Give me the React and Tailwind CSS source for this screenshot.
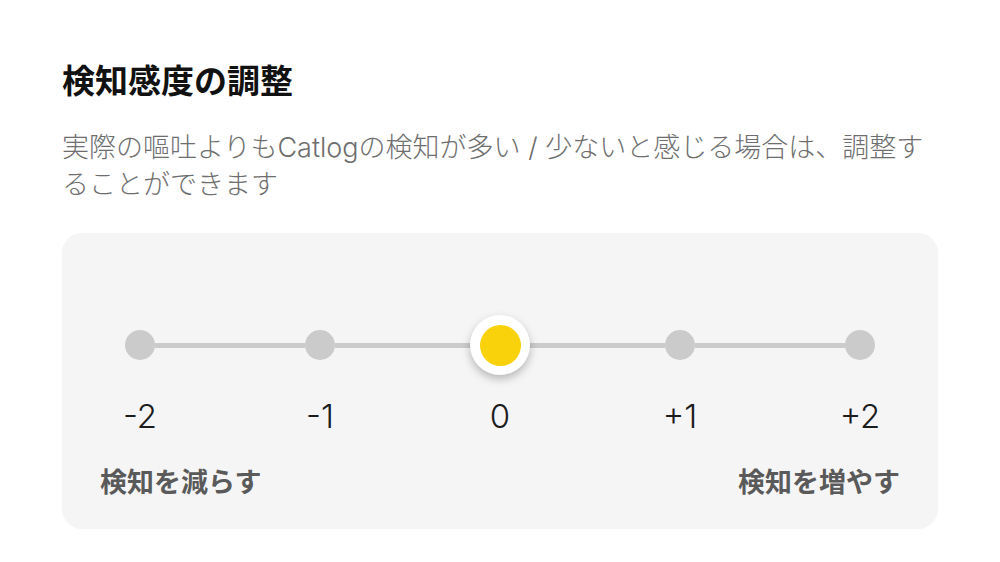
import React from 'react';

const steps = ['-2', '-1', '0', '+1', '+2'];

const Slider = ({ value }) => {
  return (
    <div className="px-[48px]">
      {/* track with stops */}
      <div className="flex items-center h-[30px]">
        {steps.map((step, index) => (
          <React.Fragment key={step}>
            {index > 0 && <div className="flex-1 h-[5px] bg-[#cbcbcb]" />}
            <div className="w-[30px] h-[30px] flex items-center justify-center shrink-0">
              {step === value ? (
                <div className="relative z-10 w-[60px] h-[60px] shrink-0 rounded-full bg-white shadow-[0_4px_8px_rgba(0,0,0,0.25)] flex items-center justify-center">
                  <div className="w-[41px] h-[41px] rounded-full bg-[#f9d20b]" />
                </div>
              ) : (
                <div className="w-[30px] h-[30px] rounded-full bg-[#cbcbcb]" />
              )}
            </div>
          </React.Fragment>
        ))}
      </div>

      {/* numbers */}
      <div className="flex justify-between mt-[36px]">
        {steps.map((step) => (
          <div key={step} className="w-[30px] flex justify-center">
            <span className="whitespace-nowrap text-[33px] leading-[40px] font-light text-[#1c1c1c]">{step}</span>
          </div>
        ))}
      </div>
    </div>
  );
};

const App = () => {
  return (
    <div
      className="min-h-screen bg-white px-[62px] pt-[61px]"
      style={{ fontFamily: 'Inter, "Noto Sans CJK JP", sans-serif' }}
    >
      {/* Header */}
      <h1 className="text-[33px] leading-[40px] font-bold text-[#111111]">検知感度の調整</h1>
      <p className="mt-[28px] text-[27px] leading-[37px] font-light text-[#6e6e6e] whitespace-nowrap">
        実際の嘔吐よりもCatlogの検知が多い / 少ないと感じる場合は、調整す
        <br />
        ることができます
      </p>

      {/* Sensitivity card */}
      <div className="mt-[30px] rounded-[20px] bg-[#f5f5f5] px-[15px] pt-[97px] pb-[28px]">
        <Slider value="0" />
        <div className="flex justify-between mt-[29px] px-[23px]">
          <span className="text-[27px] leading-[36px] font-bold text-[#5a5a5a]">検知を減らす</span>
          <span className="text-[27px] leading-[36px] font-bold text-[#5a5a5a]">検知を増やす</span>
        </div>
      </div>
    </div>
  );
};

export default App;
